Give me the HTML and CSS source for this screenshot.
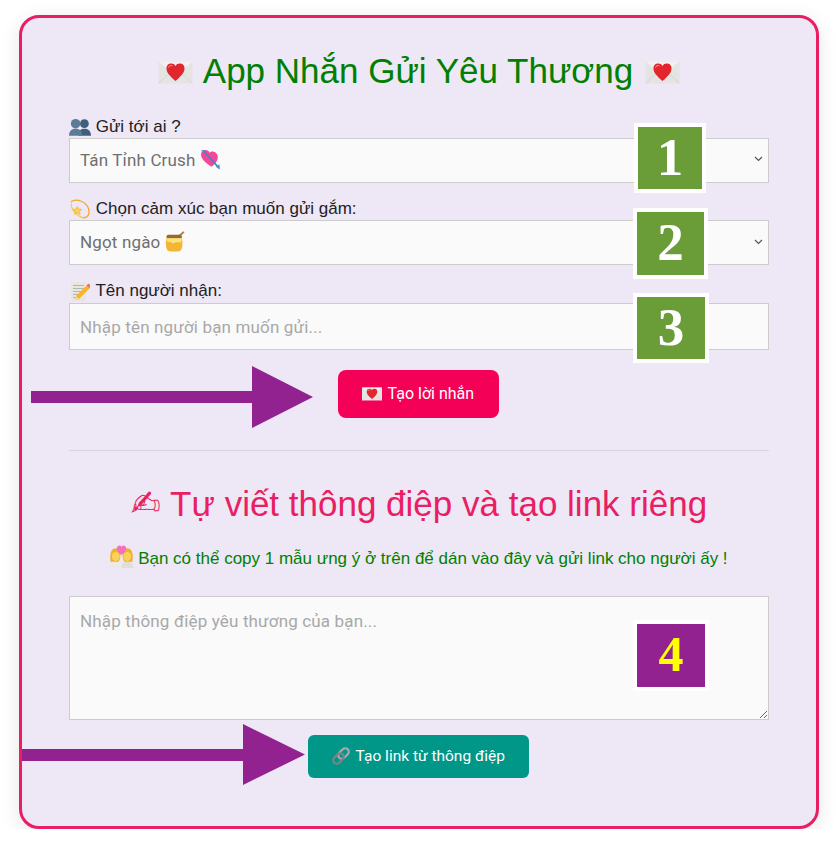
FILE: index.html
```html
<!DOCTYPE html>
<html lang="vi">
<head>
    <meta charset="UTF-8">
    <meta name="viewport" content="width=device-width, initial-scale=1.0">
    <title>App Nhắn Gửi Yêu Thương</title>
    <link rel="stylesheet" href="styles.css">
</head>
<body>
    <svg class="sprite" xmlns="http://www.w3.org/2000/svg">
        <symbol id="mail" viewBox="0 0 34 23">
            <rect x="0" y="0.500" width="34" height="22" fill="#e4e5e3"/>
            <path d="M0 22.500 L12 11 M34 22.500 L22 11" stroke="#cfd0ce" stroke-width=".8" fill="none"/>
            <path d="M0 .5 L17 14 L34 .5 Z" fill="#f1f1ef"/>
            <path d="M17 20 C10 14 8 11 8 7.200 C8 3.600 10.500 2.500 12.800 2.500 C14.700 2.500 16.200 3.300 17 5 C17.800 3.300 19.300 2.500 21.200 2.500 C23.500 2.500 26 3.600 26 7.200 C26 11 24 14 17 20 Z" fill="#e3262e"/>
            <path d="M10 6.500 C10.500 4.800 12.500 4 14 4.800" stroke="#ff9a9a" stroke-width="1" fill="none"/>
        </symbol>
        <symbol id="busts" viewBox="0 0 20 16">
            <circle cx="14" cy="5" r="4" fill="#3f5f7c"/>
            <path d="M8.500 16 C8.500 11 11 9.500 14 9.500 C17 9.500 20 11 20 16 Z" fill="#3f5f7c"/>
            <circle cx="6" cy="5" r="4.300" fill="#5b7c99"/>
            <path d="M0 16 C0 11 3 9.500 6 9.500 C9 9.500 12 11 12 16 Z" fill="#5b7c99"/>
        </symbol>
        <symbol id="dizzy" viewBox="0 0 22 22">
            <path d="M1 3 C8 -1 18 3 20.500 11 C22 17 19 21.500 14 20.500" stroke="#f4a81c" stroke-width="1.400" fill="none"/>
            <path d="M1 4 C1 11 6 18 14 20.500" stroke="#f9c846" stroke-width="1.200" fill="none"/>
            <path d="M8 8 L9.500 11 L13 11.500 L10.300 13.800 L11.200 17 L8 15.300 L5 17 L5.800 13.800 L3.200 11.500 L6.600 11 Z" fill="#fbd24e" stroke="#e8a317" stroke-width=".5"/>
        </symbol>
        <symbol id="memo" viewBox="0 0 20 20">
            <rect x="1" y="1" width="15" height="19" fill="#e8e6df"/>
            <path d="M3 4.500 H14 M3 7.500 H14 M3 10.500 H11 M3 13.500 H9 M3 16.500 H6" stroke="#a9a89f" stroke-width=".8"/>
            <path d="M6 15 L16.500 4.500 L19.500 7.500 L9 18 L5 19 Z" fill="#f5b52e"/>
            <path d="M16.500 4.500 L18 3 C18.500 2.500 19 2.500 19.500 3 L20 5 L19.500 7.500 Z" fill="#ef6a5a"/>
            <path d="M6 15 L5 19 L9 18 Z" fill="#f4d9b0"/>
        </symbol>
        <symbol id="heartarrow" viewBox="0 0 20 20">
            <path d="M11 17 C5 13 1 9.500 1 5.500 C1 2.500 3.300 1 5.300 1 C7 1 8.500 2 9.300 3.500 C10 2.500 11.500 2 13 2.500 C15 3 17 4.500 17 7.500 C17 11 14.500 14 11 17 Z" fill="#f0489a"/>
            <path d="M3 1.500 L18 18" stroke="#3f86c4" stroke-width="1.500"/>
            <path d="M15 17 L19 19.500 L18.500 14.500 Z" fill="#4b94d0"/>
            <path d="M1 1 L4.500 1.500 L3.500 4.500 Z" fill="#4b94d0"/>
        </symbol>
        <symbol id="honey" viewBox="0 0 20 20">
            <path d="M12 6 L18 .8" stroke="#b5793a" stroke-width="1.800"/>
            <rect x="1.500" y="3.500" width="14.500" height="4" rx="1.500" fill="#8f6a3c"/>
            <path d="M1.500 7 C.5 10 .5 16 2.500 18.500 C4 20 13.500 20 15 18.500 C17 16 17 10 16 7 Z" fill="#f2b632"/>
            <path d="M1.800 7 H15.800 V9.500 C14 12 12.500 10.500 11 10.500 C9.500 10.500 8 13 6 11 C4 9.500 3 11 1.800 9.500 Z" fill="#fde27c"/>
        </symbol>
        <symbol id="kiss" viewBox="0 0 22 22">
            <path d="M0 22 C0 17 2 16 5.500 16 C9 16 11 17 11 22 Z" fill="#eceae6"/>
            <path d="M11 22 C11 17 13 16 16.500 16 C20 16 22 17 22 22 Z" fill="#e0ded9"/>
            <path d="M.5 16 C-.5 7 1.500 3 5.500 3 C8 3 10 6 10 10 C10 13 9 15 8 16 Z" fill="#eeb02e"/>
            <path d="M21.500 16 C22.500 7 20.500 3 16.500 3 C14 3 12 6 12 10 C12 13 13 15 14 16 Z" fill="#eeb02e"/>
            <ellipse cx="5.500" cy="11" rx="3.800" ry="4.300" fill="#fcd15a"/>
            <ellipse cx="16.500" cy="11" rx="3.800" ry="4.300" fill="#fcd15a"/>
            <path d="M11 9.500 C7.500 7 6.500 5 6.500 3.500 C6.500 1.500 8 .5 9.200 .5 C10 .5 10.600 1 11 2 C11.400 1 12 .5 12.800 .5 C14 .5 15.500 1.500 15.500 3.500 C15.500 5 14.500 7 11 9.500 Z" fill="#f56fc0"/>
        </symbol>
        <symbol id="link" viewBox="0 0 20 20">
            <g fill="none" stroke-width="2.200">
                <rect x="-3.500" y="-8" width="7" height="12" rx="3.500" transform="translate(12.500 7.500) rotate(45) translate(0 2)" stroke="#a4abb0"/>
                <rect x="-3.500" y="-4" width="7" height="12" rx="3.500" transform="translate(7.500 12.500) rotate(45) translate(0 -2)" stroke="#7d8488"/>
            </g>
        </symbol>
    </svg>

    <div class="card">
        <h1 class="title"><svg class="emo emo-title"><use href="#mail"/></svg> App Nhắn Gửi Yêu Thương <svg class="emo emo-title"><use href="#mail"/></svg></h1>

        <div class="field">
            <label><svg class="emo emo-label"><use href="#busts"/></svg> Gửi tới ai ?</label>
            <div class="select-box">
                <span>Tán Tỉnh Crush <svg class="emo emo-opt"><use href="#heartarrow"/></svg></span>
                <svg class="chevron" viewBox="0 0 9 6"><path d="M1 1 L4.500 4.500 L8 1"/></svg>
            </div>
        </div>
        <div class="field">
            <label><svg class="emo emo-label"><use href="#dizzy"/></svg> Chọn cảm xúc bạn muốn gửi gắm:</label>
            <div class="select-box">
                <span>Ngọt ngào <svg class="emo emo-opt"><use href="#honey"/></svg></span>
                <svg class="chevron" viewBox="0 0 9 6"><path d="M1 1 L4.500 4.500 L8 1"/></svg>
            </div>
        </div>
        <div class="field">
            <label><svg class="emo emo-label"><use href="#memo"/></svg> Tên người nhận:</label>
            <input type="text" class="text-input" placeholder="Nhập tên người bạn muốn gửi...">
        </div>

        <div class="btn-row">
            <button class="btn btn-pink"><svg class="emo emo-btn"><use href="#mail"/></svg> Tạo lời nhắn</button>
        </div>

        <hr class="divider">

        <h2 class="subtitle"><span class="pen">✍</span> Tự viết thông điệp và tạo link riêng</h2>
        <p class="hint"><svg class="emo emo-hint"><use href="#kiss"/></svg> Bạn có thể copy 1 mẫu ưng ý ở trên để dán vào đây và gửi link cho người ấy !</p>

        <textarea class="message" placeholder="Nhập thông điệp yêu thương của bạn..."></textarea>

        <div class="btn-row btn-row-link">
            <button class="btn btn-teal"><svg class="emo emo-link"><use href="#link"/></svg> Tạo link từ thông điệp</button>
        </div>

        <!-- chu thich ve de len giao dien -->
        <div class="mark mark-1">1</div>
        <div class="mark mark-2">2</div>
        <div class="mark mark-3">3</div>
        <div class="mark mark-4">4</div>
        <svg class="arrow arrow-1" viewBox="0 0 282 62"><polygon points="0,25 221,25 221,0 282,31 221,62 221,37 0,37"/></svg>
        <svg class="arrow arrow-2" viewBox="0 0 283 61"><polygon points="0,25 221,25 221,0 283,30.500 221,61 221,37 0,37"/></svg>
    </div>
</body>
</html>
```

FILE: styles.css
```css
body {
    margin: 0;
    background-color: #fff;
    font-family: "Liberation Sans", Arial, sans-serif;
}
.sprite {
    display: none;
}
.card {
    position: relative;
    box-sizing: border-box;
    width: 800px;
    height: 814px;
    margin: 15px 0 0 19px;
    padding: 0 47px;
    background-color: #ede7f6;
    border: 3px solid #e91e63;
    border-radius: 20px;
    box-shadow: 0 4px 20px rgba(0, 0, 0, 0.1);
}
.emo {
    display: inline-block;
}
.emo-title {
    width: 35px;
    height: 23px;
    margin: 0 2px;
    vertical-align: -1px;
}
.emo-label {
    width: 22px;
    height: 20px;
    vertical-align: -5px;
}
.emo-opt {
    width: 21px;
    height: 21px;
    vertical-align: -4px;
}
.emo-btn {
    width: 20px;
    height: 14px;
    margin-right: 2px;
    vertical-align: -2px;
}
.emo-hint {
    width: 23px;
    height: 23px;
    vertical-align: -4px;
}
.emo-link {
    width: 20px;
    height: 20px;
    margin-right: 1px;
    vertical-align: -5px;
}
.title {
    margin: 0;
    padding-top: 32px;
    height: 66.600px;
    font-size: 35px;
    line-height: 42px;
    font-weight: normal;
    text-align: center;
    color: #008000;
}
.field {
    margin-bottom: 16px;
}
.field label {
    display: block;
    height: 18px;
    margin-bottom: 3.400px;
    font-size: 17px;
    line-height: 18px;
    color: #212121;
}
.select-box {
    box-sizing: border-box;
    display: flex;
    align-items: center;
    justify-content: space-between;
    height: 45px;
    padding: 0 5px 2px 10px;
    background-color: #fafafa;
    border: 1px solid #ccc;
    font-family: Roboto, sans-serif;
    font-size: 17px;
    letter-spacing: 0.150px;
    color: #6f6f6f;
}
.chevron {
    width: 9px;
    height: 6px;
    fill: none;
    stroke: #555;
    stroke-width: 1.200;
}
.text-input {
    display: block;
    box-sizing: border-box;
    width: 100%;
    height: 47px;
    padding: 1px 10px 0;
    background-color: #fafafa;
    border: 1px solid #ccc;
    font-family: Roboto, sans-serif;
    font-size: 17px;
    letter-spacing: 0.150px;
}
.text-input::placeholder,
.message::placeholder {
    color: #a8a8a8;
    opacity: 1;
}
.btn-row {
    display: flex;
    justify-content: center;
    margin-top: 20px;
    padding-right: 2px;
}
.btn-row-link {
    margin-top: 15px;
}
.btn {
    border: none;
    color: #fff;
    font-family: Roboto, sans-serif;
    font-size: 16px;
}
.btn-pink {
    width: 161px;
    height: 48px;
    background-color: #f50057;
    border-radius: 8px;
}
.btn-teal {
    width: 221px;
    height: 43px;
    background-color: #009688;
    border-radius: 6px;
    font-size: 15.500px;
}
.divider {
    height: 1px;
    margin: 32px 0 0;
    background-color: #d9d2e3;
    border: none;
}
.subtitle {
    margin: 32px 0 0;
    font-size: 35px;
    line-height: 42px;
    font-weight: normal;
    text-align: center;
    color: #e91e63;
}
.pen {
    font-family: "DejaVu Sans", sans-serif;
    font-size: 36px;
    line-height: 30px;
}
.hint {
    margin: 20px 0 0;
    font-size: 17px;
    line-height: 22px;
    text-align: center;
    color: #008000;
}
.message {
    display: block;
    box-sizing: border-box;
    width: 100%;
    height: 124px;
    margin-top: 26px;
    padding: 15px 10px;
    background-color: #fafafa;
    border: 1px solid #ccc;
    font-family: Roboto, sans-serif;
    font-size: 17px;
    letter-spacing: 0.150px;
    line-height: 19px;
}
.mark {
    position: absolute;
    box-sizing: border-box;
    display: flex;
    align-items: center;
    justify-content: center;
    padding-bottom: 3px;
    background-color: #6a9c38;
    border: 4px solid #fff;
    font-family: "Liberation Serif", serif;
    font-size: 53px;
    font-weight: bold;
    color: #fff;
}
.mark-1 {
    left: 612px;
    top: 105px;
    width: 72px;
    height: 70px;
}
.mark-2 {
    left: 611px;
    top: 190px;
    width: 75px;
    height: 71px;
}
.mark-3 {
    left: 611px;
    top: 275px;
    width: 76px;
    height: 70px;
}
.mark-4 {
    left: 611px;
    top: 602px;
    width: 76px;
    height: 71px;
    background-color: #92228f;
    color: #ffff00;
    font-size: 50px;
}
.arrow {
    position: absolute;
    fill: #92228f;
}
.arrow-1 {
    left: 9px;
    top: 348px;
    width: 282px;
    height: 62px;
}
.arrow-2 {
    left: 0;
    top: 706px;
    width: 283px;
    height: 61px;
}
```
